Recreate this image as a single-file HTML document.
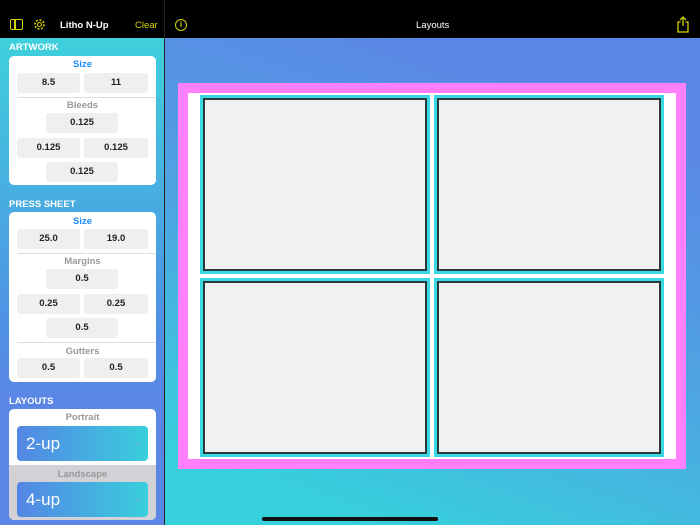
<!DOCTYPE html><html><head><style>
*{margin:0;padding:0;box-sizing:border-box}
body{width:700px;height:525px;overflow:hidden;font-family:"Liberation Sans",sans-serif;position:relative;background:#000}
.a{position:absolute}
#side{left:0;top:38px;width:164px;height:487px;background:linear-gradient(180deg,#3ed0dc 0%,#5090e4 60%,#5b86e5 75%)}
#div{left:164px;top:0;width:1px;height:525px;background:#222}
#main{left:165px;top:38px;width:535px;height:487px;background:linear-gradient(200deg,#5b86e5 15%,#4fa2e2 50%,#36d1dc 90%)}
.hd{color:#fff;font-size:9.5px;font-weight:bold;left:9px}
.card{background:#fff;border-radius:5px;left:9px;width:147px}
.f{position:absolute;background:#efeff0;border-radius:3px;height:20px;font-size:9.5px;font-weight:bold;color:#222;text-align:center;line-height:20px}
.l{position:absolute;width:147px;left:0;text-align:center;font-size:9.5px;font-weight:bold;color:#999}
.sep{position:absolute;left:8px;width:139px;height:1px;background:#ddd}
.btn{position:absolute;left:8px;width:131px;height:35px;border-radius:4px;background:linear-gradient(90deg,#5585e5,#38cfdc);color:#fff;font-size:17px;line-height:35px;padding-left:9px}
.btn span{position:absolute;right:9px;font-size:9px;color:#8ab}
.cell{position:absolute;width:230px;height:179px;border:3px solid #3ad8e4}
.cell div{width:100%;height:100%;border:2px solid #2a3a3c;background:#f1f1f1}
</style></head><body>
<div class="a" style="left:10px;top:19px;width:13px;height:11px;border:1.5px solid #d4d400;border-radius:2px"></div>
<div class="a" style="left:14px;top:19px;width:1.5px;height:11px;background:#d4d400"></div>
<svg class="a" style="left:33px;top:18px" width="13" height="13" viewBox="0 0 13 13"><circle cx="6.5" cy="6.5" r="4.5" fill="none" stroke="#d4d400" stroke-width="1.6" stroke-dasharray="2 1.5"/><circle cx="6.5" cy="6.5" r="2" fill="none" stroke="#d4d400" stroke-width="1.1"/></svg>
<div class="a" style="left:60px;top:20px;color:#fff;font-size:9.5px;font-weight:bold">Litho N-Up</div>
<div class="a" style="left:135px;top:20px;color:#d4d400;font-size:9.5px">Clear</div>
<div class="a" style="left:175px;top:19px;width:12px;height:12px;border:1.3px solid #d4d400;border-radius:50%;color:#d4d400;font-size:8px;text-align:center;line-height:10px;font-weight:bold">i</div>
<div class="a" style="left:416px;top:20px;color:#fff;font-size:9.5px">Layouts</div>
<svg class="a" style="left:676px;top:16px" width="14" height="17" viewBox="0 0 14 17"><path d="M4.5 6H2v10h10V6H9.5M7 1v9M4 4l3-3 3 3" fill="none" stroke="#d4d400" stroke-width="1.3"/></svg>
<div id="side" class="a"></div><div id="div" class="a"></div><div id="main" class="a"></div>
<div class="a hd" style="top:42px">ARTWORK</div>
<div class="a card" style="top:56px;height:129px">
<div class="l" style="top:3px;color:#1a8cff">Size</div>
<div class="f" style="left:8px;top:17px;width:63px">8.5</div><div class="f" style="left:75px;top:17px;width:64px">11</div>
<div class="sep" style="top:41px"></div>
<div class="l" style="top:44px">Bleeds</div>
<div class="f" style="left:37px;top:57px;width:72px">0.125</div>
<div class="f" style="left:8px;top:82px;width:63px">0.125</div><div class="f" style="left:75px;top:82px;width:64px">0.125</div>
<div class="f" style="left:37px;top:106px;width:72px">0.125</div>
</div>
<div class="a hd" style="top:199px">PRESS SHEET</div>
<div class="a card" style="top:212px;height:170px">
<div class="l" style="top:4px;color:#1a8cff">Size</div>
<div class="f" style="left:8px;top:17px;width:63px">25.0</div><div class="f" style="left:75px;top:17px;width:64px">19.0</div>
<div class="sep" style="top:41px"></div>
<div class="l" style="top:44px">Margins</div>
<div class="f" style="left:37px;top:57px;width:72px">0.5</div>
<div class="f" style="left:8px;top:82px;width:63px">0.25</div><div class="f" style="left:75px;top:82px;width:64px">0.25</div>
<div class="f" style="left:37px;top:106px;width:72px">0.5</div>
<div class="sep" style="top:130px"></div>
<div class="l" style="top:134px">Gutters</div>
<div class="f" style="left:8px;top:146px;width:63px">0.5</div><div class="f" style="left:75px;top:146px;width:64px">0.5</div>
</div>
<div class="a hd" style="top:396px">LAYOUTS</div>
<div class="a card" style="top:409px;height:111px;overflow:hidden">
<div class="l" style="top:3px">Portrait</div>
<div class="btn" style="top:17px">2-up<span>›</span></div>
<div style="position:absolute;left:0;top:56px;width:147px;height:60px;background:#d2d2d6"></div>
<div class="l" style="top:60px">Landscape</div>
<div class="btn" style="top:73px">4-up<span>›</span></div>
</div>
<div class="a" style="left:178px;top:83px;width:508px;height:386px;background:#ff80f8"></div>
<div class="a" style="left:188px;top:93px;width:488px;height:366px;background:#fff"></div>
<div class="cell" style="left:200px;top:95px"><div></div></div>
<div class="cell" style="left:434px;top:95px"><div></div></div>
<div class="cell" style="left:200px;top:278px"><div></div></div>
<div class="cell" style="left:434px;top:278px"><div></div></div>
<div class="a" style="left:262px;top:517px;width:176px;height:4px;border-radius:2px;background:#111"></div>
</body></html>
